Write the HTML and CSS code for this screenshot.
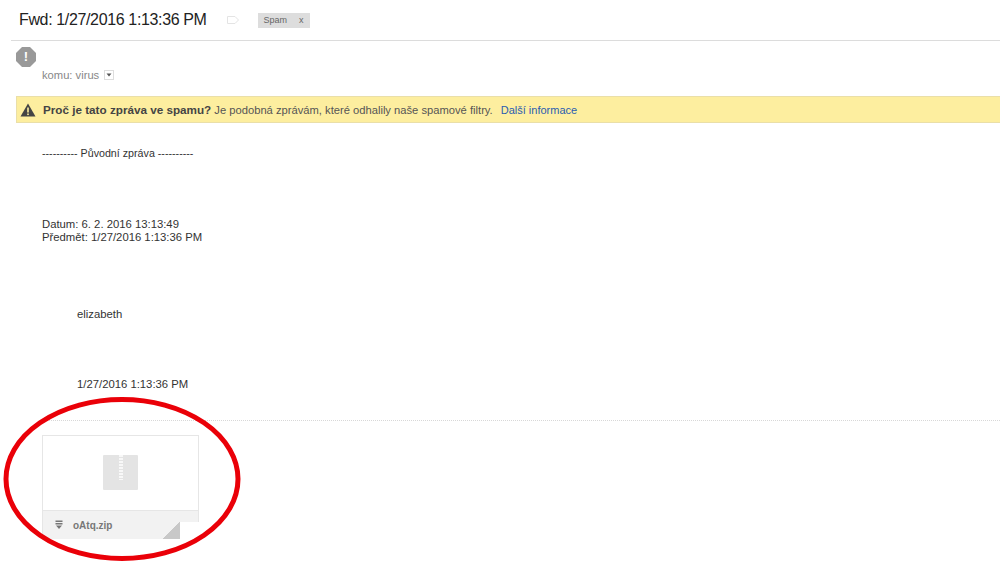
FILE: index.html
```html
<!DOCTYPE html>
<html lang="cs">
<head>
<meta charset="utf-8">
<title>Fwd: 1/27/2016 1:13:36 PM</title>
<link rel="stylesheet" href="styles.css">
</head>
<body>
<div class="page">
  <header class="subject">
    <h1 class="subject-title">Fwd: 1/27/2016 1:13:36 PM</h1>
    <svg class="label-icon" width="14" height="10" viewBox="0 0 14 10"><path d="M1.500 1.500H9L12.500 5 9 8.500H1.500Z" fill="none" stroke="#e4e4e4" stroke-width="1"/></svg>
    <span class="tag"><span>Spam</span><span class="tag-x">x</span></span>
  </header>
  <section class="sender">
    <div class="avatar">!</div>
    <div class="recipient">komu: virus <span class="caret"><svg width="8" height="6" viewBox="0 0 8 6"><path d="M1.500 1.500H6.500L4 4.500Z" fill="#555"/></svg></span></div>
  </section>
  <div class="warning">
    <svg class="warning-icon" width="16" height="14" viewBox="0 0 16 14"><path d="M8 0.500L15.500 13.500H0.500Z" fill="#444"/><rect x="7.200" y="4.500" width="1.600" height="5" fill="#fdee9f"/><rect x="7.200" y="10.500" width="1.600" height="1.600" fill="#fdee9f"/></svg>
    <span class="warning-text"><b>Proč je tato zpráva ve spamu?</b> Je podobná zprávám, které odhalily naše spamové filtry.</span>
    <a class="warning-link">Další informace</a>
  </div>
  <main class="body">
    <p class="orig">---------- Původní zpráva ----------</p>
    <p class="meta">Datum: 6. 2. 2016 13:13:49<br>Předmět: 1/27/2016 1:13:36 PM</p>
    <p class="inner first">elizabeth</p>
    <p class="inner second">1/27/2016 1:13:36 PM</p>
  </main>
  <div class="divider"></div>
  <div class="attachment">
    <div class="thumb">
      <div class="zip"><span class="zipper"></span></div>
    </div>
    <div class="file">
      <svg class="file-icon" width="8" height="10" viewBox="0 0 8 10"><path d="M0.500 0.500H7.500V2H0.500ZM0.500 3H7.500V4.500H0.500ZM1 5.500H7L4 9Z" fill="#777"/></svg>
      <span class="file-name">oAtq.zip</span>
      <span class="fold"></span>
    </div>
  </div>
  <svg class="circle" width="250" height="172" viewBox="0 0 250 172"><ellipse cx="122" cy="89" rx="116" ry="79.500" fill="none" stroke="#ea0008" stroke-width="5"/></svg>
</div>
</body>
</html>
```
FILE: styles.css
```css
* { box-sizing: border-box; }
html, body { margin: 0; padding: 0; background: #fff; }
body { width: 1000px; height: 562px; overflow: hidden; font-family: "Liberation Sans", Arial, sans-serif; color: #222; }
.page { position: relative; width: 1000px; height: 562px; }

.subject { display: flex; align-items: center; height: 41px; margin-left: 11px; padding-left: 8px; border-bottom: 1px solid #dcdcdc; }
.subject-title { margin: 0; font-size: 16px; letter-spacing: -0.360px; font-weight: 400; color: #222; }
.label-icon { margin-left: 19px; }
.tag { display: flex; gap: 12px; margin-left: 18px; padding: 0 6px; height: 15px; align-items: center; background: #dddddd; color: #666; font-size: 9px; }

.sender { position: relative; height: 55px; padding: 28px 0 0 42px; }
.avatar { position: absolute; left: 16px; top: 6px; width: 20px; height: 20px; background: #999; color: #fff; font-size: 13px; font-weight: 700; text-align: center; line-height: 20px; clip-path: polygon(30% 0, 70% 0, 100% 30%, 100% 70%, 70% 100%, 30% 100%, 0 70%, 0 30%); }
.recipient { font-size: 11.200px; color: #888; display: flex; align-items: center; gap: 5px; line-height: 12px; }
.caret { display: inline-flex; align-items: center; justify-content: center; width: 10px; height: 10px; border: 1px solid #ddd; }

.warning { display: flex; align-items: center; height: 27px; margin-left: 16px; padding-left: 3px; background: #fdee9f; border: 1px solid #eadfa8; border-right: 0; font-size: 11.200px; color: #555; }
.warning-text b { font-size: 11.700px; color: #444; }
.warning-icon { margin-right: 7px; }
.warning-link { margin-left: 8px; font-size: 11px; color: #2a5db0; }

.body { padding-left: 42px; font-size: 11.300px; line-height: 13px; color: #333; }
.body p { margin: 0; }
.body .orig { padding-top: 24px; font-size: 10.700px; }
.meta { padding-top: 58px; }
.inner { padding-left: 35px; }
.first { padding-top: 64px; }
.second { padding-top: 57px; }

.divider { height: 0; margin: 29px 0 0 42px; border-top: 1px dotted #d8d8d8; }
.attachment { width: 157px; height: 104px; margin: 14px 0 0 42px; border: 1px solid #e6e6e6; border-bottom: 0; }
.thumb { display: flex; align-items: center; justify-content: center; height: 74px; padding-bottom: 2px; background: #fff; }
.zip { display: flex; justify-content: center; width: 35px; height: 35px; background: #e4e4e4; border-radius: 1px; }
.zipper { width: 4px; height: 25px; background: repeating-linear-gradient(180deg, #f8f8f8 0 2px, #e4e4e4 2px 3px); }
.file { position: relative; display: flex; align-items: center; height: 29px; background: #f2f2f2; border-top: 1px solid #e6e6e6; padding-left: 12px; }
.file-name { margin-left: 10px; font-size: 10px; font-weight: 700; color: #777; }
.fold { position: absolute; right: -1px; bottom: 0; width: 37px; height: 17px; background: linear-gradient(135deg, #f2f2f2 50%, #c8c8c8 50%) left bottom / 18px 17px no-repeat, #fff; }

.circle { position: absolute; left: 0; top: 390px; }
```
